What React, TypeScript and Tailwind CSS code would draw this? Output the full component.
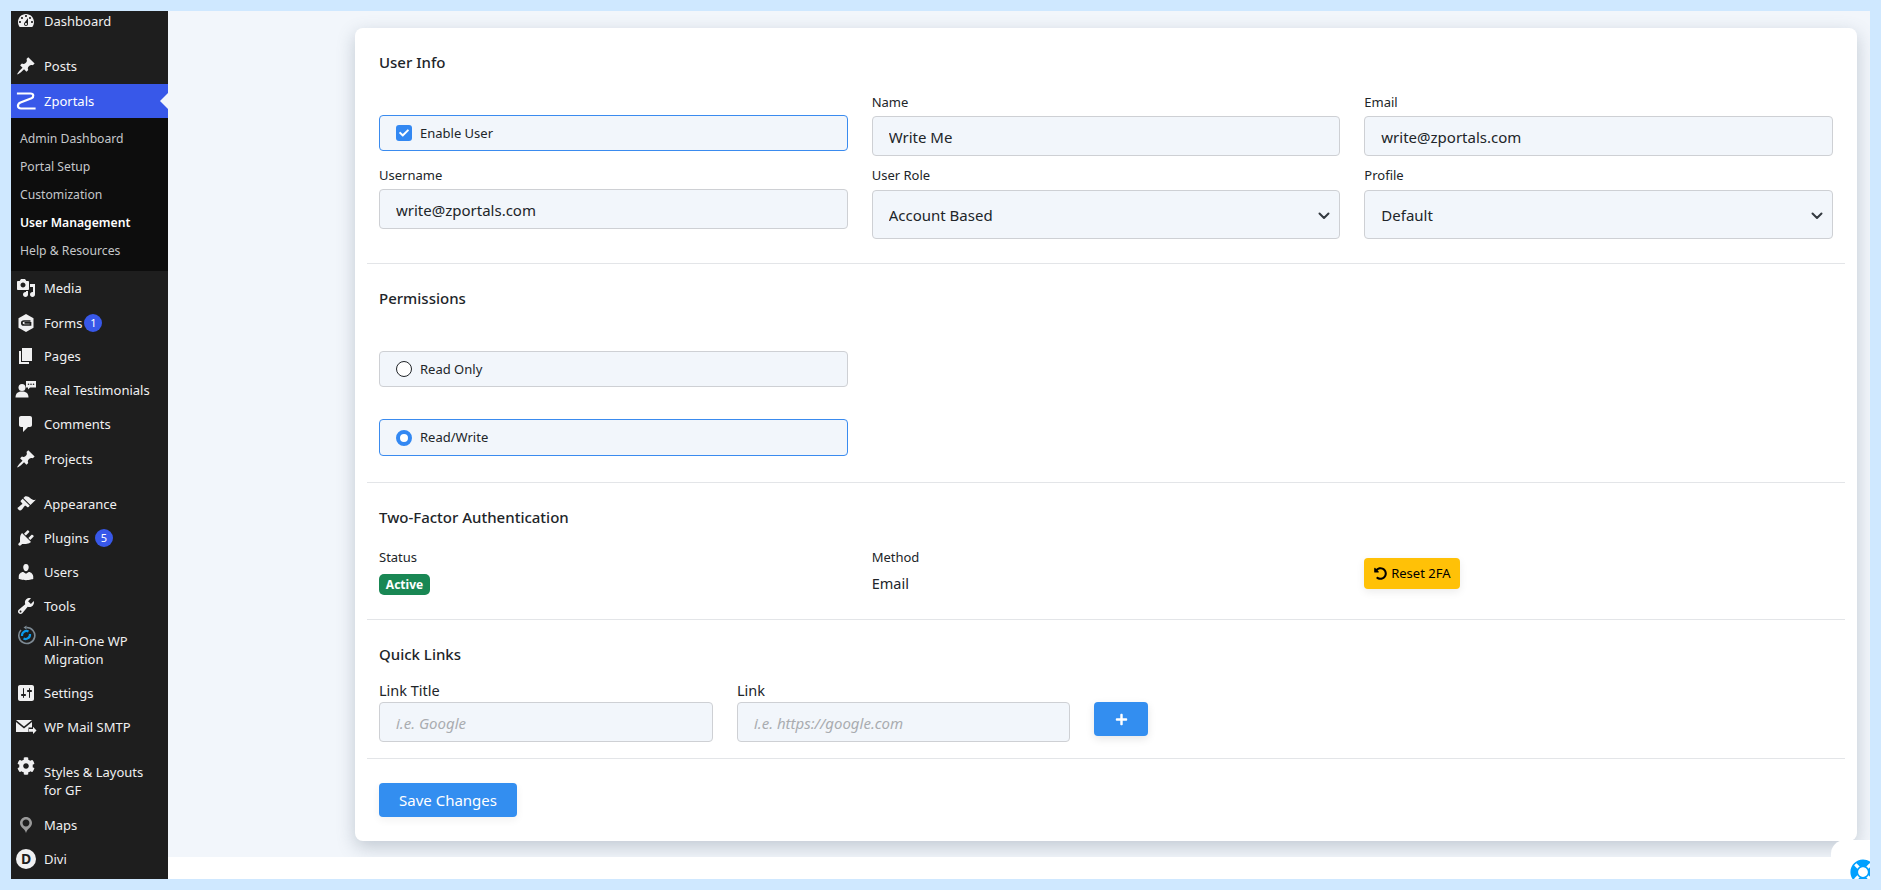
import type { ReactNode } from 'react';
import { FaLifeRing, FaCog, FaUndoAlt, FaPlus, FaCheck } from 'react-icons/fa';

const fontStack = { fontFamily: '"Noto Sans", sans-serif' };

// dashicons, 20x20
const d = {
    dashboard: 'M3.76 16h12.48c1.1-1.37 1.76-3.11 1.76-5 0-4.42-3.58-8-8-8s-8 3.58-8 8c0 1.89.66 3.63 1.76 5zM10 4c.55 0 1 .45 1 1s-.45 1-1 1-1-.45-1-1 .45-1 1-1zM6 6c.55 0 1 .45 1 1s-.45 1-1 1-1-.45-1-1 .45-1 1-1zm8 0c.55 0 1 .45 1 1s-.45 1-1 1-1-.45-1-1 .45-1 1-1zm-5.37 5.55L12 7v6c0 1.1-.9 2-2 2s-2-.9-2-2c0-.57.24-1.08.63-1.45zM4 10c.55 0 1 .45 1 1s-.45 1-1 1-1-.45-1-1 .45-1 1-1zm12 0c.55 0 1 .45 1 1s-.45 1-1 1-1-.45-1-1 .45-1 1-1zm-5 3c0-.55-.45-1-1-1s-1 .45-1 1 .45 1 1 1 1-.45 1-1z',
    pin: 'M10.44 3.02l1.82-1.82 6.36 6.35-1.83 1.82c-1.05-.68-2.48-.57-3.41.36l-.75.75c-.92.93-1.04 2.35-.35 3.41l-1.83 1.82-2.41-2.41-2.8 2.79c-.42.42-3.38 2.71-3.8 2.29s1.86-3.39 2.28-3.81l2.79-2.79L4.1 9.36l1.83-1.82c1.05.69 2.48.57 3.4-.36l.75-.75c.93-.92 1.04-2.35.36-3.41z',
    media: 'M13 11V4c0-.55-.45-1-1-1h-1.67L9 1H5L3.67 3H2c-.55 0-1 .45-1 1v7c0 .55.45 1 1 1h10c.55 0 1-.45 1-1zM7 4.5c1.38 0 2.5 1.12 2.5 2.5S8.38 9.5 7 9.5 4.5 8.38 4.5 7 5.62 4.5 7 4.5zM14 6h5v10.5c0 1.38-1.12 2.5-2.5 2.5S14 17.88 14 16.5s1.12-2.5 2.5-2.5c.17 0 .34.02.5.05V9h-3V6zm-4 8.05V13h2v3.5c0 1.38-1.12 2.5-2.5 2.5S7 17.88 7 16.5 8.12 14 9.5 14c.17 0 .34.02.5.05z',
    page: 'M6 15V2h10v13H6zm-1 1h8v2H3V5h2v11z',
    comments: 'M5 2h9c1.1 0 2 .9 2 2v7c0 1.1-.9 2-2 2h-2l-5 5v-5H5c-1.1 0-2-.9-2-2V4c0-1.1.9-2 2-2z',
    appearance: 'M14.48 11.06L7.41 3.99l1.5-1.5c.5-.56 2.3-.47 3.51.32 1.21.8 1.43 1.28 2.91 2.1 1.18.64 2.45 1.26 4.45.85zm-.71.71L6.7 4.7 4.93 6.47c-.39.39-.39 1.02 0 1.41l1.06 1.06c.39.39.39 1.03 0 1.42-.6.6-1.43 1.11-2.21 1.69-.35.26-.7.53-1.01.84C1.43 13.23 1 14.2 2.4 15.6c1.41 1.4 2.37.98 3.71-.36.31-.31.58-.66.84-1.01.58-.78 1.09-1.61 1.69-2.21.39-.39 1.02-.39 1.41 0l1.06 1.06c.39.39 1.02.39 1.41 0z',
    plugins: 'M13.11 4.36L9.87 7.6 8 5.73l3.24-3.24c.35-.34 1.05-.2 1.56.32.52.51.66 1.21.31 1.55zm-8 1.77l.91-1.12 9.01 9.01-1.19.84c-.71.71-2.63 1.16-3.82 1.16H6.14L4.9 17.26c-.59.59-1.54.59-2.12 0-.59-.58-.59-1.53 0-2.12l1.24-1.24v-3.88c0-1.13.4-3.19 1.09-3.89zm7.26 3.97l3.24-3.24c.34-.35 1.04-.21 1.55.31.52.51.66 1.21.31 1.55l-3.24 3.25z',
    users: 'M10 9.25c-2.27 0-2.73-3.44-2.73-3.44C7 4.02 7.82 2 9.97 2c2.16 0 2.98 2.02 2.71 3.81 0 0-.41 3.44-2.68 3.44zm0 2.57L12.72 10c2.39 0 4.52 2.33 4.52 4.53v2.49s-3.65 1.13-7.24 1.13c-3.65 0-7.24-1.13-7.24-1.13v-2.49c0-2.25 1.94-4.48 4.47-4.48z',
    tools: 'M16.68 9.77c-1.34 1.34-3.3 1.67-4.95.99l-5.41 6.52c-.99.99-2.59.99-3.58 0s-.99-2.59 0-3.57l6.52-5.42c-.68-1.65-.35-3.61.99-4.95 1.28-1.28 3.12-1.62 4.72-1.06l-2.89 2.89 2.82 2.82 2.86-2.87c.53 1.58.18 3.39-1.08 4.65zM3.81 16.21c.4.39 1.04.39 1.43 0 .4-.4.4-1.04 0-1.43-.39-.4-1.03-.4-1.43 0-.39.39-.39 1.03 0 1.43z',
    settings: 'M18 16V4c0-1.1-.9-2-2-2H4c-1.1 0-2 .9-2 2v12c0 1.1.9 2 2 2h12c1.1 0 2-.9 2-2zM8 11h1c.55 0 1 .45 1 1s-.45 1-1 1H8v1.5c0 .28-.22.5-.5.5s-.5-.22-.5-.5V13H6c-.55 0-1-.45-1-1s.45-1 1-1h1V5.5c0-.28.22-.5.5-.5s.5.22.5.5V11zm5-2h-1c-.55 0-1-.45-1-1s.45-1 1-1h1V5.5c0-.28.22-.5.5-.5s.5.22.5.5V7h1c.55 0 1 .45 1 1s-.45 1-1 1h-1v5.5c0 .28-.22.5-.5.5s-.5-.22-.5-.5V9z',
    location: 'M10 2C6.69 2 4 4.69 4 8c0 2.02 1.17 3.71 2.53 4.89.43.37 1.18.96 1.85 1.83.74.97 1.24 2.04 1.62 3.28.38-1.24.88-2.31 1.62-3.28.67-.87 1.42-1.46 1.85-1.83C14.83 11.71 16 10.02 16 8c0-3.31-2.69-6-6-6zm0 2.56c1.9 0 3.44 1.54 3.44 3.44S11.9 11.44 10 11.44 6.56 9.9 6.56 8 8.1 4.56 10 4.56z',
};

function Dash({ path, className = 'text-[#f0f0f1]' }: { path: string; className?: string }) {
    return (
        <svg viewBox="0 0 20 20" className={`h-5 w-5 shrink-0 ${className}`} fill="currentColor">
            <path fillRule="evenodd" d={path} />
        </svg>
    );
}

const ZLogo = () => (
    <svg viewBox="0 0 20 20" className="h-5 w-5 shrink-0" fill="none" stroke="#fff" strokeWidth="2.2" strokeLinecap="square" strokeLinejoin="round">
        <path d="M2 2.5 H14.5 C18 2.5 18 6 15.5 7.2 L4.5 11.5 C1 13 1 17.5 5 17.5 H18.5" />
    </svg>
);

const FormsIcon = () => (
    <svg viewBox="0 0 20 20" className="h-5 w-5 shrink-0">
        <path d="M10 1 L17.5 5.2 V14.8 L10 19 L2.5 14.8 V5.2 Z" fill="#f0f0f1" />
        <path d="M14.5 8 H8 C6.5 8 5.8 8.7 5.8 10 C5.8 11.3 6.5 12 8 12 H14.5 V9.9 H8.5" fill="none" stroke="#1e1e1e" strokeWidth="1.7" />
    </svg>
);

const TestimonialIcon = () => (
    <svg viewBox="0 0 22 20" className="h-5 w-[22px] shrink-0" fill="#f0f0f1">
        <circle cx="7" cy="7.5" r="3.5" />
        <path d="M0.5 17.5 C0.5 13 3.5 11.5 7 11.5 C10.5 11.5 13.5 13 13.5 17.5 Z" />
        <path d="M11 1 H21 V7.5 H15 L13 9.5 V7.5 H11 Z" />
        <circle cx="13.5" cy="4.2" r=".8" fill="#1e1e1e" />
        <circle cx="16" cy="4.2" r=".8" fill="#1e1e1e" />
        <circle cx="18.5" cy="4.2" r=".8" fill="#1e1e1e" />
    </svg>
);

const MigrationIcon = () => (
    <svg viewBox="0 0 20 20" className="h-5 w-5 shrink-0" fill="none">
        <path d="M5 5 A8 8 0 1 0 10.5 2.5" stroke="#7d8a94" strokeWidth="1.6" />
        <path d="M10.5 0.5 L7.5 2.5 L10.5 4.5 Z" fill="#7d8a94" />
        <path d="M6 11 A4.5 4.5 0 0 1 12.5 6.5 M14 9 A4.5 4.5 0 0 1 7.5 13.5" stroke="#0a9bec" strokeWidth="2.2" />
    </svg>
);

const MailIcon = () => (
    <svg viewBox="0 0 22 20" className="h-5 w-[22px] shrink-0" fill="#f0f0f1">
        <path d="M1 3 H17 L9 9.5 Z" />
        <path d="M1 5 L9 11.5 L17 5 L17 10.5 H13.5 V15 H1 Z" />
        <path d="M14 12 H18 V9.8 L21.5 13.4 L18 17 V14.8 H14 Z" />
    </svg>
);

const DiviIcon = () => (
    <span className="flex h-5 w-5 shrink-0 items-center justify-center rounded-full bg-[#f0f0f1] text-[14px] font-bold leading-none text-[#1e1e1e]">D</span>
);

type MenuItem = { label: ReactNode; icon: ReactNode; badge?: string; top?: string; tall?: boolean };

function SideItem({ label, icon, badge, top = '', tall = false }: MenuItem) {
    return (
        <div className={`relative flex ${tall ? 'h-[52px] items-start pt-[8px]' : 'h-[34px] items-center'} pl-[5px] text-[13px] leading-[18px] text-[#f0f0f1] ${top}`}>
            <span className={`flex w-[20px] shrink-0 justify-center ${tall ? '-mt-[8px] pt-[1px]' : ''}`}>{icon}</span>
            <span className="ml-[8px] flex items-center">
                <span>{label}</span>
                {badge && (
                    <span className={`flex h-[18px] w-[18px] items-center justify-center rounded-full bg-[#3858e9] text-[11px] text-white ${badge === '1' ? 'ml-[2px]' : 'ml-[6px]'}`}>{badge}</span>
                )}
            </span>
        </div>
    );
}

function Sidebar() {
    return (
        <aside className="w-[157px] shrink-0 overflow-hidden bg-[#1e1e1e]">
            <div className="-mt-[7px]">
                <SideItem label="Dashboard" icon={<Dash path={d.dashboard} />} />
            </div>
            <SideItem label="Posts" icon={<Dash path={d.pin} />} top="mt-[11px]" />
            <div className="relative mt-[1px] flex h-[34px] items-center bg-[#3858e9] pl-[5px] text-[13px] text-white">
                <span className="flex w-[20px] shrink-0 justify-center"><ZLogo /></span>
                <span className="ml-[8px] pt-[1px]">Zportals</span>
                <span className="absolute right-0 top-[9px] h-0 w-0 border-y-[8px] border-r-[8px] border-y-transparent border-r-[#f2f6fb]" />
            </div>
            <div className="bg-[#0d0d0d] pb-[6px] pl-[9px] pt-[7px] text-[12.2px] leading-[28px] text-[#c5c7ca]">
                <div>Admin Dashboard</div>
                <div>Portal Setup</div>
                <div>Customization</div>
                <div className="font-semibold text-white">User Management</div>
                <div>Help &amp; Resources</div>
            </div>
            <SideItem label="Media" icon={<Dash path={d.media} />} />
            <SideItem label="Forms" icon={<FormsIcon />} badge="1" top="mt-[1px]" />
            <SideItem label="Pages" icon={<Dash path={d.page} />} top="-mt-[1px]" />
            <SideItem label="Real Testimonials" icon={<TestimonialIcon />} />
            <SideItem label="Comments" icon={<Dash path={d.comments} />} />
            <SideItem label="Projects" icon={<Dash path={d.pin} />} top="mt-[1px]" />
            <SideItem label="Appearance" icon={<Dash path={d.appearance} />} top="mt-[11px]" />
            <SideItem label="Plugins" icon={<Dash path={d.plugins} />} badge="5" />
            <SideItem label="Users" icon={<Dash path={d.users} />} />
            <SideItem label="Tools" icon={<Dash path={d.tools} />} />
            <SideItem label={<>All-in-One WP<br />Migration</>} icon={<MigrationIcon />} tall top="mt-[1px]" />
            <SideItem label="Settings" icon={<Dash path={d.settings} />} />
            <SideItem label="WP Mail SMTP" icon={<MailIcon />} />
            <SideItem label={<>Styles &amp; Layouts<br />for GF</>} icon={<FaCog className="mt-[1px] h-[18px] w-[18px] shrink-0 text-[#f0f0f1]" />} tall top="mt-[11px]" />
            <SideItem label="Maps" icon={<Dash path={d.location} className="text-[#9a9a9a]" />} top="mt-[1px]" />
            <SideItem label="Divi" icon={<DiviIcon />} />
        </aside>
    );
}

const inputClass = 'block h-10 w-full rounded-[4px] border border-[#ced0d4] bg-[#f2f6fb] pl-[16px] pr-[13px] pt-[1px] text-[15px] text-[#212529] outline-none';
const labelClass = 'block h-5 text-[13px] leading-5 text-[#212529]';

function Field({ label, value }: { label: string; value: string }) {
    return (
        <div>
            <label className={labelClass}>{label}</label>
            <input readOnly value={value} className={`${inputClass} mt-[4px]`} />
        </div>
    );
}

function SelectField({ label, value }: { label: string; value: string }) {
    return (
        <div>
            <label className={labelClass}>{label}</label>
            <div className="relative mt-[5px]">
                <select defaultValue={value} className="block h-[49px] w-full appearance-none rounded-[4px] border border-[#ced0d4] bg-[#f2f6fb] pl-[16px] pr-[13px] pt-[2px] text-[15px] text-[#212529] outline-none">
                    <option>{value}</option>
                </select>
                <svg viewBox="0 0 16 16" className="pointer-events-none absolute right-[8px] top-[18px] h-4 w-4" fill="none" stroke="#343a40" strokeWidth="2" strokeLinecap="round" strokeLinejoin="round">
                    <path d="M3.5 5.5l4.5 4.5 4.5-4.5" />
                </svg>
            </div>
        </div>
    );
}

function OptionBox({ active, mark, label, h }: { active: boolean; mark: ReactNode; label: string; h: string }) {
    return (
        <div className={`flex w-[469px] items-center rounded-[4px] border bg-[#f2f6fb] pl-[16px] text-[13px] text-[#212529] ${h} ${active ? 'border-[#3a8bef]' : 'border-[#ced0d4]'}`}>
            {mark}
            <span className="ml-[8px] pt-[1px]">{label}</span>
        </div>
    );
}

function Title({ children }: { children: ReactNode }) {
    return <h2 className="h-5 text-[15px] font-[550] leading-5 text-[#212529]">{children}</h2>;
}

function UserForm() {
    return (
        <div className="rounded-[8px] bg-white px-3 shadow-[0_6px_18px_rgba(90,105,125,0.32)]">
            <section className="border-b border-[#e3e5e8] px-3 pb-[24px] pt-[24px]">
                <Title>User Info</Title>
                <div className="mt-[20px] grid grid-cols-3 gap-x-6">
                    <div className="mb-[5px] self-end">
                        <OptionBox
                            active
                            h="h-[36px]"
                            label="Enable User"
                            mark={<span className="flex h-4 w-4 items-center justify-center rounded-[3px] bg-[#3388f2] text-white"><FaCheck className="h-[10px] w-[10px]" /></span>}
                        />
                    </div>
                    <Field label="Name" value="Write Me" />
                    <Field label="Email" value="write@zportals.com" />
                </div>
                <div className="mt-[9px] grid grid-cols-3 gap-x-6">
                    <Field label="Username" value="write@zportals.com" />
                    <SelectField label="User Role" value="Account Based" />
                    <SelectField label="Profile" value="Default" />
                </div>
            </section>

            <section className="border-b border-[#e3e5e8] px-3 pb-[26px] pt-[24px]">
                <Title>Permissions</Title>
                <div className="mt-[43px]">
                    <OptionBox active={false} h="h-[36px]" label="Read Only" mark={<span className="h-4 w-4 rounded-full border border-[#212529] bg-white" />} />
                </div>
                <div className="mt-[32px]">
                    <OptionBox active h="h-[37px]" label="Read/Write" mark={<span className="h-4 w-4 rounded-full border-[4px] border-[#3388f2] bg-white" />} />
                </div>
            </section>

            <section className="border-b border-[#e3e5e8] px-3 pb-[24px] pt-[24px]">
                <Title>Two-Factor Authentication</Title>
                <div className="mt-[20px] grid grid-cols-3 gap-x-6">
                    <div>
                        <div className={labelClass}>Status</div>
                        <span className="mt-[7px] flex h-[21px] w-[51px] items-center justify-center rounded-[5px] bg-[#198754] text-[12px] font-bold text-white">Active</span>
                    </div>
                    <div>
                        <div className={labelClass}>Method</div>
                        <div className="mt-[6px] text-[14.5px] leading-5 text-[#212529]">Email</div>
                    </div>
                    <div className="pt-[11px]">
                        <button className="flex h-[31px] w-[96px] items-center justify-center gap-[4px] rounded-[4px] bg-[#ffc107] text-[13px] text-black shadow-[0_3px_8px_rgba(0,0,0,0.08)]">
                            <FaUndoAlt className="h-[13px] w-[13px]" />
                            Reset 2FA
                        </button>
                    </div>
                </div>
            </section>

            <section className="border-b border-[#e3e5e8] px-3 pb-[16px] pt-[24px]">
                <Title>Quick Links</Title>
                <div className="mt-[16px] flex items-start">
                    <div className="w-[334px]">
                        <label className={`${labelClass} text-[14.5px]`}>Link Title</label>
                        <input readOnly placeholder="i.e. Google" className={`${inputClass} mt-[2px] placeholder:italic placeholder:text-[#a9acb0]`} />
                    </div>
                    <div className="ml-[24px] w-[333px]">
                        <label className={`${labelClass} text-[14.5px]`}>Link</label>
                        <input readOnly placeholder="i.e. https://google.com" className={`${inputClass} mt-[2px] placeholder:italic placeholder:text-[#a9acb0]`} />
                    </div>
                    <button className="ml-[24px] mt-[22px] flex h-[34px] w-[54px] items-center justify-center rounded-[4px] bg-[#338ef0] text-white shadow-[0_3px_8px_rgba(0,0,0,0.1)]">
                        <FaPlus className="h-[13px] w-[13px]" />
                    </button>
                </div>
            </section>

            <div className="px-3 pb-[24px] pt-[24px]">
                <button className="flex h-[34px] w-[138px] items-center justify-center rounded-[4px] bg-[#338ef0] text-[15px] text-white shadow-[0_3px_8px_rgba(0,0,0,0.06)]">
                    Save Changes
                </button>
            </div>
        </div>
    );
}

export default function App() {
    return (
        <div className="h-[890px] w-full overflow-hidden bg-[#cfe8ff] p-[11px]" style={fontStack}>
            <div className="flex h-full">
                <Sidebar />
                <main className="relative flex min-w-0 flex-1 flex-col overflow-hidden">
                    <div className="flex-1 bg-[#f2f6fb] pl-[187px] pr-[13px] pt-[17px]">
                        <UserForm />
                    </div>
                    <div className="relative z-10 h-[22px] shrink-0 bg-white" />
                    {/* help widget, cut off by the frame */}
                    <div className="absolute bottom-0 right-0 z-20 h-[39px] w-[39px] overflow-hidden rounded-tl-[14px] bg-white">
                        <FaLifeRing className="absolute left-[19px] top-[19px] h-[26px] w-[26px] text-[#00a0ff]" />
                    </div>
                </main>
            </div>
        </div>
    );
}
